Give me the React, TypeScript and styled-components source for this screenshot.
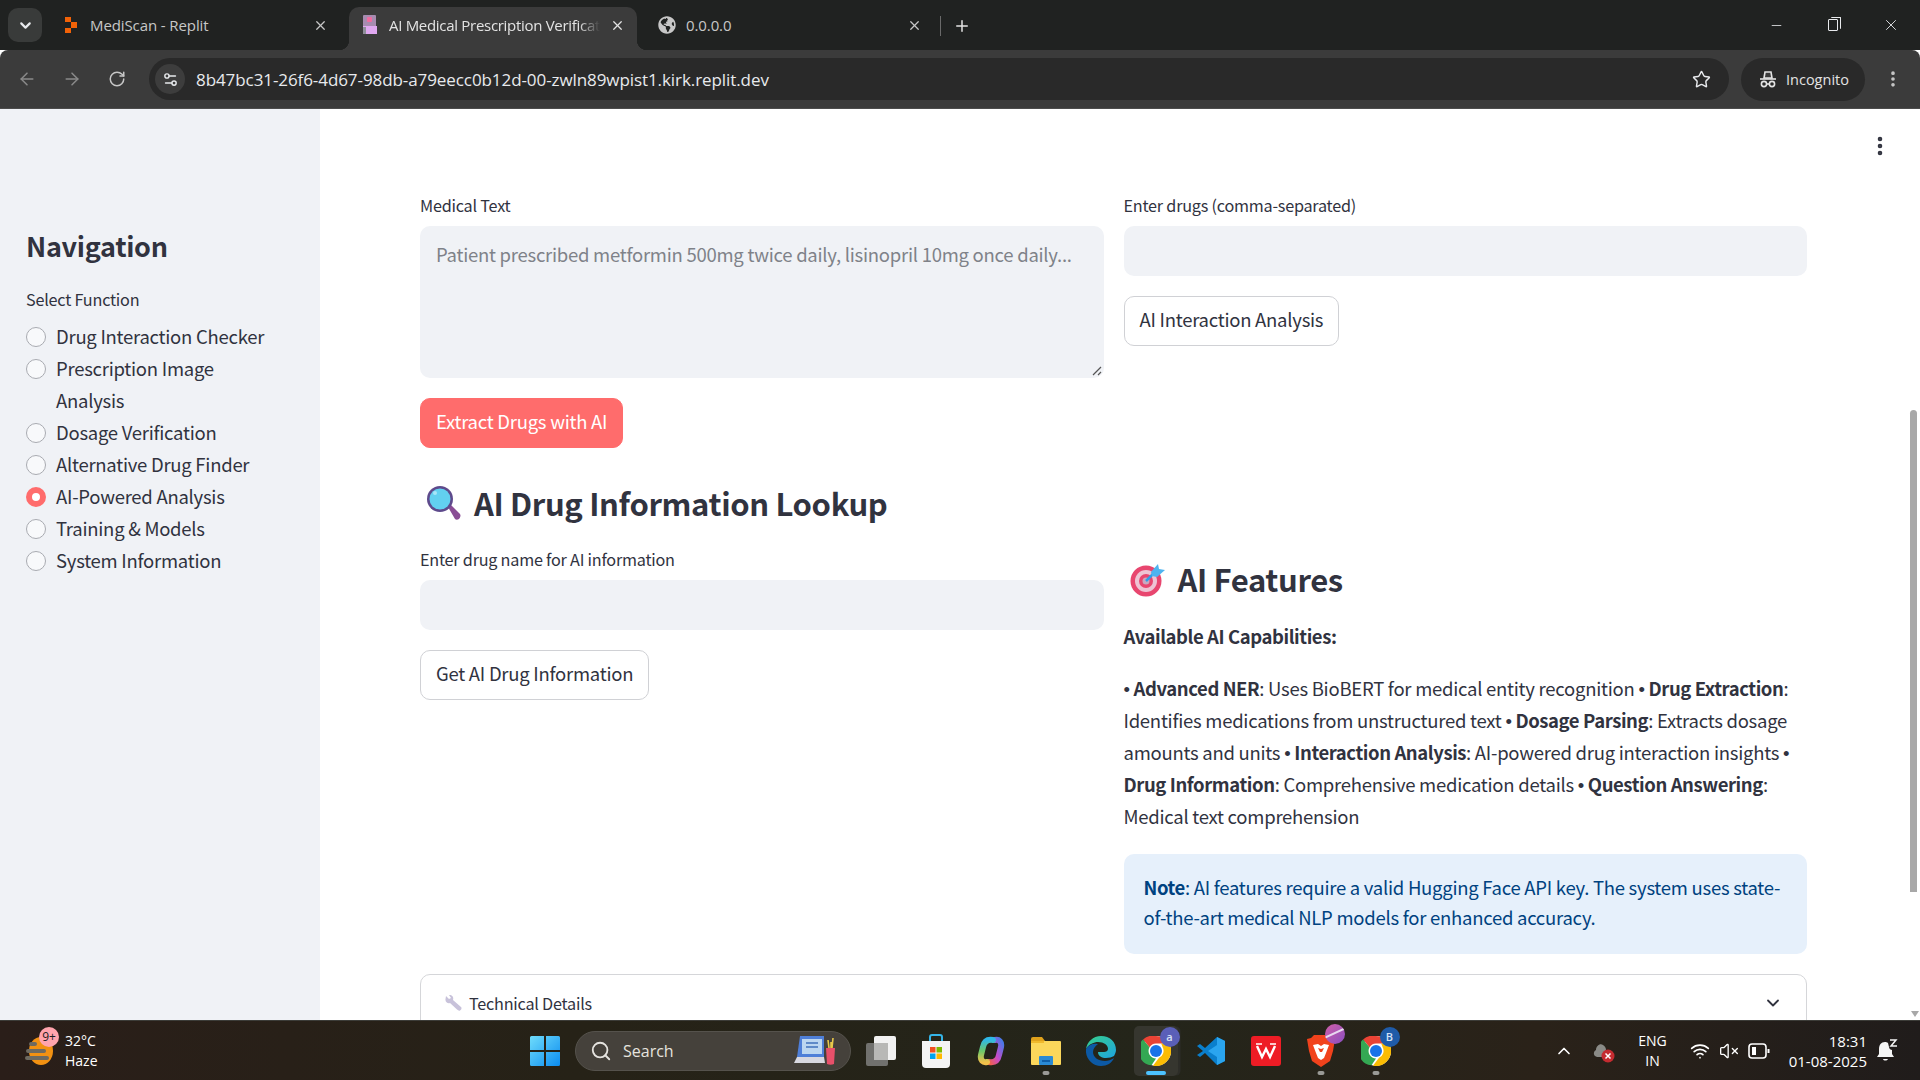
import React from 'react';
import styled, { createGlobalStyle } from 'styled-components';
import {
  ArrowLeft,
  ArrowRight,
  ChevronDown,
  ChevronUp,
  EllipsisVertical,
  Minus,
  Plus,
  RotateCw,
  Search,
  Settings2,
  Star,
  VolumeX,
  Wifi,
  X,
} from 'lucide-react';
import { FaGlobeAmericas } from 'react-icons/fa';

const pageFont = '"Noto Sans CJK SC", "Noto Sans", sans-serif';
const chromeFont = '"Open Sans", "Noto Sans", sans-serif';

const GlobalStyle = createGlobalStyle`
  html, body {
    margin: 0;
    padding: 0;
    height: 100%;
    overflow: hidden;
    background: #fff;
  }
  #root {
    height: 1080px;
  }
  * {
    box-sizing: border-box;
  }
`;

const Screen = styled.div`
  display: flex;
  flex-direction: column;
  width: 1920px;
  height: 1080px;
  overflow: hidden;
`;

/* browser chrome */

const TabStrip = styled.div`
  display: flex;
  align-items: flex-end;
  height: 50px;
  flex: none;
  padding-left: 8px;
  background: #202221;
  font-family: ${chromeFont};
`;

const TabMenu = styled.div`
  display: flex;
  align-items: center;
  justify-content: center;
  width: 34px;
  height: 34px;
  margin-right: 8px;
  margin-bottom: 8px;
  border-radius: 10px;
  background: #393b3a;
  color: #e8eaed;
`;

const Tab = styled.div<{ $active?: boolean; $wide?: boolean }>`
  position: relative;
  display: flex;
  align-items: center;
  gap: 10px;
  width: ${({ $wide }) => ($wide ? '290px' : '288px')};
  height: 43px;
  margin-right: 9px;
  padding: 0 12px 7px;
  border-radius: 10px 10px 0 0;
  background: ${({ $active }) => ($active ? '#3b3b3b' : 'transparent')};
  color: ${({ $active }) => ($active ? '#e3e3e3' : '#c7c7c7')};

  ${({ $active }) =>
    $active &&
    `
    &::before, &::after {
      content: '';
      position: absolute;
      bottom: 0;
      width: 10px;
      height: 10px;
    }
    &::before {
      left: -10px;
      background: radial-gradient(circle at 0 0, transparent 10px, #3b3b3b 10.5px);
    }
    &::after {
      right: -10px;
      background: radial-gradient(circle at 100% 0, transparent 10px, #3b3b3b 10.5px);
    }
  `}
`;

const TabIcon = styled.span`
  display: flex;
  align-items: center;
  justify-content: center;
  flex: none;
  width: 18px;
  height: 18px;
`;

const TabTitle = styled.span<{ $fade?: boolean }>`
  flex: 1;
  min-width: 0;
  overflow: hidden;
  white-space: nowrap;
  font-size: 15px;
  line-height: 20px;
  letter-spacing: ${({ $fade }) => ($fade ? '-0.3px' : '-0.1px')};
  ${({ $fade }) =>
    $fade && 'mask-image: linear-gradient(to right, #000 90%, transparent 100%);'}
`;

const TabDivider = styled.span`
  width: 1px;
  height: 20px;
  margin: 0 12px 14px -3px;
  background: #6a6a6a;
`;

const NewTab = styled.span`
  display: flex;
  margin-bottom: 15px;
  color: #e3e3e3;
`;

const WindowControls = styled.div`
  display: flex;
  align-items: center;
  gap: 44px;
  margin-left: auto;
  margin-right: 20px;
  margin-bottom: 16px;
  color: #e8eaed;
`;

const RestoreIcon = styled.span`
  position: relative;
  display: block;
  width: 10px;
  height: 12px;
  border: 1.2px solid #e8eaed;
  border-radius: 1px;

  &::after {
    content: '';
    position: absolute;
    top: -3.5px;
    right: -3.5px;
    width: 9px;
    height: 11px;
    border-top: 1.2px solid #e8eaed;
    border-right: 1.2px solid #e8eaed;
    border-radius: 1px;
  }
`;

const Toolbar = styled.div`
  display: flex;
  align-items: center;
  height: 59px;
  flex: none;
  padding: 0 17px 0 17px;
  border-radius: 8px 8px 0 0;
  border-bottom: 1px solid #4c4c4c;
  background: #3b3b3b;
  font-family: ${chromeFont};
`;

const NavButton = styled.span<{ $dim?: boolean }>`
  display: flex;
  justify-content: center;
  width: 20px;
  margin-right: 25px;
  color: ${({ $dim }) => ($dim ? '#8a8a8a' : '#c7c7c7')};
`;

const Omnibox = styled.div`
  display: flex;
  align-items: center;
  width: 1580px;
  height: 42px;
  margin-left: -3px;
  padding: 0 18px 0 6px;
  border-radius: 21px;
  background: #292929;
  color: #e8eaed;
`;

const SiteInfo = styled.span`
  display: flex;
  align-items: center;
  justify-content: center;
  width: 30px;
  height: 30px;
  margin-right: 11px;
  border-radius: 50%;
  background: #3d3d3d;
`;

const Url = styled.span`
  flex: 1;
  font-size: 17px;
  letter-spacing: -0.08px;
`;

const IncognitoPill = styled.div`
  display: flex;
  align-items: center;
  gap: 9px;
  width: 124px;
  height: 43px;
  margin-left: 12px;
  padding-left: 18px;
  border-radius: 22px;
  background: #292929;
  color: #e3e3e3;
  font-size: 14.5px;
`;

const MenuDots = styled.span`
  display: flex;
  margin-left: auto;
  color: #c7c7c7;
`;

/* streamlit page */

const Page = styled.div`
  display: flex;
  flex: 1;
  min-height: 0;
  overflow: hidden;
  background: #fff;
  color: #31333f;
  font-family: ${pageFont};
`;

const Sidebar = styled.aside`
  flex: none;
  width: 320px;
  padding: 117px 30px 0 26px;
  background: #f0f2f6;
`;

const SidebarTitle = styled.h2`
  margin: 0 0 20px;
  font-size: 27px;
  line-height: 40px;
  font-weight: 600;
  letter-spacing: -0.3px;
`;

const FieldLabel = styled.div`
  font-size: 16.2px;
  line-height: 26px;
  letter-spacing: -0.22px;
  margin-bottom: 8px;
`;

const RadioList = styled.div`
  margin-top: 0;
`;

const RadioRow = styled.div`
  display: flex;
  align-items: flex-start;
  gap: 10px;
  font-size: 18.5px;
  line-height: 32px;
  letter-spacing: -0.26px;
`;

const RadioText = styled.span`
  max-width: 216px;
`;

const RadioDot = styled.span<{ $on?: boolean }>`
  flex: none;
  width: 20px;
  height: 20px;
  margin-top: 7px;
  border-radius: 50%;
  border: ${({ $on }) => ($on ? '6px solid #ff6c6c' : '1px solid #a9abb1')};
  background: ${({ $on }) => ($on ? '#fff' : '#f8f9fb')};
`;

const Main = styled.main`
  position: relative;
  flex: 1;
  min-width: 0;
  overflow: hidden;
  padding: 83px 103px 0 100px;
`;

const KebabButton = styled.span`
  position: absolute;
  top: 25px;
  right: 18px;
  display: flex;
  color: #31333f;
`;

const Columns = styled.div`
  display: grid;
  grid-template-columns: 1fr 1fr;
  column-gap: 20px;
  align-items: start;
`;

const Column = styled.div`
  min-width: 0;
`;

const TextArea = styled.div`
  position: relative;
  height: 152px;
  padding: 14px 16px;
  border-radius: 10px;
  background: #f0f2f6;
  color: #7f8289;
  font-size: 18.5px;
  line-height: 28px;
  letter-spacing: -0.26px;
`;

const ResizeGrip = styled.svg`
  position: absolute;
  right: 2px;
  bottom: 2px;
`;

const TextInput = styled.div`
  height: 50px;
  border-radius: 10px;
  background: #f0f2f6;
`;

const ActionButton = styled.div<{ $primary?: boolean }>`
  display: inline-flex;
  align-items: center;
  height: 50px;
  margin-top: 20px;
  padding: 0 15px 4px;
  border-radius: 10px;
  border: 1px solid ${({ $primary }) => ($primary ? '#ff6c6c' : '#d0d1d5')};
  background: ${({ $primary }) => ($primary ? '#ff6c6c' : '#fff')};
  color: ${({ $primary }) => ($primary ? '#fff' : '#31333f')};
  font-size: 18.5px;
  letter-spacing: -0.26px;
`;

const SectionHeading = styled.h2<{ $top: number; $bottom: number }>`
  display: flex;
  align-items: center;
  gap: 12px;
  margin: ${({ $top }) => $top}px 0 ${({ $bottom }) => $bottom}px;
  font-size: 31px;
  line-height: 44px;
  font-weight: 600;
  letter-spacing: -0.36px;
`;

const HeadingEmoji = styled.svg`
  flex: none;
  margin-left: 6px;
`;

const BoldLine = styled.p`
  margin: 19px 0 20px;
  font-size: 18.5px;
  line-height: 32px;
  font-weight: 600;
  letter-spacing: -0.42px;
`;

const Paragraph = styled.p`
  margin: 0;
  font-size: 18.5px;
  line-height: 32px;
  letter-spacing: -0.26px;

  strong {
    font-weight: 600;
    letter-spacing: -0.42px;
  }
`;

const Bullet = styled.span`
  font-family: "Liberation Sans", sans-serif;
  line-height: 0;
`;

const InfoBox = styled.div`
  margin-top: 22px;
  height: 100px;
  padding: 18px 20px 0;
  border-radius: 10px;
  background: #e6f0fb;
  color: #004280;
  font-size: 18.5px;
  line-height: 30px;
  letter-spacing: -0.26px;

  strong {
    font-weight: 600;
    letter-spacing: -0.42px;
  }
`;

const Expander = styled.div`
  display: flex;
  align-items: center;
  height: 70px;
  margin-top: 20px;
  padding: 0 23px 12px 24px;
  border: 1px solid #d5d6d9;
  border-radius: 10px;
  font-size: 16.2px;
  letter-spacing: -0.22px;
`;

const ExpanderTitle = styled.span`
  flex: 1;
  margin-left: 7px;
`;

const ScrollTrack = styled.div`
  position: relative;
  flex: none;
  width: 10px;
  padding-top: 301px;
`;

const ScrollThumb = styled.div`
  width: 7px;
  height: 482px;
  border-radius: 4px 4px 0 0;
  background: #a8a8a8;
`;

const ScrollArrow = styled.span`
  position: absolute;
  left: 1px;
  bottom: 3px;
  width: 0;
  height: 0;
  border-left: 4px solid transparent;
  border-right: 4px solid transparent;
  border-top: 6px solid #a8a8a8;
`;

/* taskbar */

const Taskbar = styled.div`
  display: flex;
  align-items: center;
  height: 60px;
  flex: none;
  border-top: 1px solid #3c3c38;
  background: linear-gradient(90deg, #2a1e19 0%, #262217 30%, #24251a 60%, #2a2219 80%, #201c1b 100%);
  color: #fff;
  font-family: ${chromeFont};
`;

const Weather = styled.div`
  display: flex;
  align-items: center;
  width: 517px;
  flex: none;
  padding-left: 25px;
`;

const WeatherIcon = styled.span`
  position: relative;
  display: block;
  width: 30px;
  height: 30px;
  margin-right: 10px;
`;

const NotifyBadge = styled.span`
  position: absolute;
  top: -9px;
  left: 14px;
  width: 20px;
  height: 20px;
  border-radius: 50%;
  background: #ffa4ad;
  color: #1c1c1c;
  font-size: 12px;
  line-height: 20px;
  text-align: center;
`;

const WeatherText = styled.div`
  font-size: 14px;
  line-height: 20px;
`;

const TaskSlot = styled.span`
  position: relative;
  display: flex;
  align-items: center;
  justify-content: center;
  flex: none;
  width: 55px;
  height: 50px;
`;

const ActiveTile = styled.span`
  position: absolute;
  left: 6px;
  top: 0;
  width: 44px;
  height: 50px;
  border-radius: 5px;
  background: #36362f;
  box-shadow: 3px 0 0 -0.5px #2d2d28;
`;

const SlotIcon = styled.span`
  position: relative;
  display: flex;
`;

const RunningDot = styled.span<{ $active?: boolean }>`
  position: absolute;
  bottom: 1px;
  left: 50%;
  transform: translateX(-50%);
  width: ${({ $active }) => ($active ? '20px' : '7px')};
  height: 4px;
  border-radius: 2px;
  background: ${({ $active }) => ($active ? '#4cc2ff' : '#9a9a96')};
`;

const ProfileBadge = styled.span<{ $color: string }>`
  position: absolute;
  top: -9px;
  right: -9px;
  width: 20px;
  height: 20px;
  border-radius: 50%;
  background: ${({ $color }) => $color};
  color: #d5e2f5;
  font-size: 11px;
  font-weight: 600;
  line-height: 20px;
  text-align: center;
`;

const SearchBox = styled.div`
  display: flex;
  align-items: center;
  width: 276px;
  height: 40px;
  flex: none;
  margin: 0 2px 0 3px;
  padding: 0 14px 0 14px;
  border-radius: 20px;
  border: 1px solid #55524c;
  background: #45413b;
  color: #e5e3df;
  font-size: 16px;
`;

const SearchLabel = styled.span`
  flex: 1;
  margin-left: 11px;
`;

const Tray = styled.div`
  display: flex;
  align-items: center;
  margin-left: auto;
  padding-right: 35px;
  color: #fff;
`;

const TrayIcon = styled.span<{ $left: number }>`
  display: flex;
  margin-left: ${({ $left }) => $left}px;
`;

const TrayLang = styled.div`
  margin: 0 23px 0 22px;
  font-size: 14px;
  line-height: 20px;
  text-align: center;
`;

const Clock = styled.div`
  margin-left: 19px;
  font-size: 15px;
  line-height: 20px;
  text-align: right;
`;

const BellIcon = styled.span`
  position: relative;
  display: flex;
  margin-left: 9px;
  margin-right: -13px;
`;

const PurpleBadge = styled.span`
  position: absolute;
  top: -11px;
  right: -10px;
  width: 20px;
  height: 20px;
  border-radius: 50%;
  background: linear-gradient(135deg, #d05fa8, #8a4ec0);
  overflow: hidden;

  &::after {
    content: '';
    position: absolute;
    top: 8px;
    left: -2px;
    width: 24px;
    height: 1.5px;
    background: #e8d8f0;
    transform: rotate(-25deg);
  }
`;

/* drawings */

const ReplitIcon = () => (
  <svg width="14" height="16" viewBox="0 0 14 16">
    <path d="M1 0h6v5H1zM7 5h6v6H7zM1 11h6v5H1z" fill="#f26207" />
  </svg>
);

const DocFavicon = () => (
  <svg width="16" height="20" viewBox="0 0 16 20">
    <rect x="1" y="0" width="13" height="12" rx="1" fill="#a78bb0" />
    <rect x="5" y="2" width="5" height="5" rx="1" fill="#f06ba0" />
    <rect x="1" y="11" width="14" height="8" fill="#e0a8f0" />
    <rect x="1" y="12" width="3" height="7" fill="#8f8f9a" />
  </svg>
);

const IncognitoIcon = () => (
  <svg width="18" height="18" viewBox="0 0 18 18" fill="none" stroke="#e3e3e3" strokeWidth="1.6">
    <path d="M5 8l1-6h6l1 6z" fill="#3b3b3b" />
    <path d="M1 9h16" />
    <circle cx="5" cy="14" r="2.6" />
    <circle cx="13" cy="14" r="2.6" />
    <path d="M7.5 14h3" />
  </svg>
);

const MagnifierEmoji = () => (
  <HeadingEmoji width="36" height="36" viewBox="0 0 36 36">
    <path d="M22 22l3-2 9 9c1 1.500 0 4-1 5-1.500 1-3 1-4 0z" fill="#8a4d95" />
    <circle cx="14" cy="14" r="13" fill="#5e4a8c" />
    <circle cx="14" cy="14" r="10.500" fill="#62d0f0" />
    <circle cx="9" cy="8" r="2" fill="#a8e6f8" />
  </HeadingEmoji>
);

const TargetEmoji = () => (
  <HeadingEmoji width="36" height="36" viewBox="0 0 36 36">
    <circle cx="16" cy="20" r="15.500" fill="#e8466f" />
    <circle cx="16" cy="20" r="11" fill="#eec4d4" />
    <circle cx="16" cy="20" r="7" fill="#e8466f" />
    <circle cx="16" cy="20" r="3.500" fill="#c9a8c0" />
    <path d="M16 20l10-10" stroke="#2f9fe8" strokeWidth="2.500" />
    <path d="M21 11l7-8 1 5 6 1-8 7-5-1z" fill="#4fb4f0" />
  </HeadingEmoji>
);

const WrenchEmoji = () => (
  <svg width="17" height="17" viewBox="0 0 17 17">
    <path
      d="M1 1l3 3 2-1-2-3c3-.5 5 2 4 5l8 7c1 1 .5 2.500-1 3.500-1 .5-2 0-3-1L5 8C3 9 0 7 .5 4z"
      fill="#c8c2da"
    />
  </svg>
);

const WindowsLogo = () => (
  <svg width="30" height="30" viewBox="0 0 30 30">
    <defs>
      <linearGradient id="winGrad" x1="0" y1="0" x2="1" y2="1">
        <stop offset="0" stopColor="#6fdcfb" />
        <stop offset="1" stopColor="#0b8cf0" />
      </linearGradient>
    </defs>
    <path d="M0 1.500A1.500 1.500 0 0 1 1.500 0H14v14H0zM16 0h12.500A1.500 1.500 0 0 1 30 1.500V14H16zM0 16h14v14H1.500A1.500 1.500 0 0 1 0 28.500zM16 16h14v12.500a1.500 1.500 0 0 1-1.500 1.500H16z" fill="url(#winGrad)" />
  </svg>
);

const SearchArt = () => (
  <svg width="42" height="32" viewBox="0 0 42 32">
    <path d="M6 1h24v21H3z" fill="#4f7fd8" />
    <rect x="8" y="4" width="20" height="15" fill="#bcd6f0" />
    <rect x="12" y="7" width="12" height="2" fill="#5f8ac8" />
    <rect x="12" y="11" width="12" height="2" fill="#5f8ac8" />
    <path d="M3 22h27l1 6H0z" fill="#d8d8e0" />
    <path d="M32 13h9l-1 16c-2 1-5 1-7 0z" fill="#e8506a" />
    <path d="M35 13l-1-8M38 13l1-10M37 13v-6" stroke="#e8c84a" strokeWidth="1.600" />
  </svg>
);

const TaskViewIcon = () => (
  <svg width="30" height="30" viewBox="0 0 30 30">
    <rect x="8" y="0" width="22" height="24" rx="2" fill="#f2f2f2" />
    <rect x="0" y="7" width="22" height="23" rx="2" fill="#7a7a78" opacity="0.9" />
    <rect x="8" y="7" width="14" height="17" fill="#b8b8b6" />
  </svg>
);

const StoreIcon = () => (
  <svg width="30" height="34" viewBox="0 0 30 34">
    <path d="M9 7V3a2 2 0 0 1 2-2h8a2 2 0 0 1 2 2v4" fill="none" stroke="#35b5e8" strokeWidth="2" />
    <path d="M1 7h28v23a4 4 0 0 1-4 4H5a4 4 0 0 1-4-4z" fill="#f4f4f4" />
    <rect x="9" y="13" width="5.500" height="5.500" fill="#f25022" />
    <rect x="15.500" y="13" width="5.500" height="5.500" fill="#7fba00" />
    <rect x="9" y="19.500" width="5.500" height="5.500" fill="#00a4ef" />
    <rect x="15.500" y="19.500" width="5.500" height="5.500" fill="#ffb900" />
  </svg>
);

const CopilotIcon = () => (
  <svg width="30" height="30" viewBox="0 0 30 30" fill="none" strokeWidth="6" strokeLinecap="round">
    <defs>
      <linearGradient id="copA" x1="0" y1="1" x2="1" y2="0">
        <stop offset="0" stopColor="#f0604a" />
        <stop offset="0.45" stopColor="#c84ac8" />
        <stop offset="1" stopColor="#4a78e8" />
      </linearGradient>
      <linearGradient id="copB" x1="0.5" y1="0" x2="0.5" y2="1">
        <stop offset="0" stopColor="#2fb8e8" />
        <stop offset="0.5" stopColor="#6cc86a" />
        <stop offset="1" stopColor="#f2c14a" />
      </linearGradient>
    </defs>
    <path d="M13 26C19 27 22 24 23 19L25 11C26 6 23 3 19 4" stroke="url(#copA)" />
    <path d="M17 4C11 3 8 6 7 11L5 19C4 24 7 27 11 26" stroke="url(#copB)" />
  </svg>
);

const ExplorerIcon = () => (
  <svg width="30" height="30" viewBox="0 0 30 30">
    <path d="M0 3a2 2 0 0 1 2-2h9l3 4H0z" fill="#e0a21c" />
    <rect x="0" y="5" width="30" height="24" rx="1" fill="#fbd75b" />
    <path d="M0 5h13v2H0z" fill="#f0b92c" />
    <rect x="8" y="20" width="14" height="9" rx="1" fill="#2a8ad4" />
    <rect x="11" y="24" width="8" height="2" fill="#0f5fa8" />
  </svg>
);

const EdgeIcon = () => (
  <svg width="30" height="30" viewBox="0 0 30 30">
    <defs>
      <linearGradient id="edgeA" x1="0" y1="0" x2="1" y2="1">
        <stop offset="0" stopColor="#37d08a" />
        <stop offset="1" stopColor="#1ea4e0" />
      </linearGradient>
    </defs>
    <path d="M15 0C7 0 1 6 0 13c3-5 8-7 12-7 6 0 10 3 10 7 0 2-2 3-4 3h-6c0 4 4 6 8 6 3 0 6-1 8-2 1-2 2-4 2-6C30 6 24 0 15 0z" fill="url(#edgeA)" />
    <path d="M0 13c-1 9 6 17 15 17 6 0 11-3 13-8-3 2-6 3-9 3-7 0-12-4-12-9 0-3 2-6 5-8C7 7 2 9 0 13z" fill="#0c59a4" />
  </svg>
);

const ChromeIcon = () => (
  <svg width="30" height="30" viewBox="0 0 30 30">
    <circle cx="15" cy="15" r="15" fill="#fff" />
    <path d="M15 0a15 15 0 0 1 13 7.500H15A7.500 7.500 0 0 0 8.500 11.300L2 3.500A15 15 0 0 1 15 0z" fill="#ea4335" />
    <path d="M2 3.500l6.500 7.800A7.500 7.500 0 0 0 15 22.500L10.500 29.300A15 15 0 0 1 2 3.500z" fill="#34a853" />
    <path d="M28 7.500A15 15 0 0 1 12 29.700l6-8A7.500 7.500 0 0 0 21.500 11 7.500 7.500 0 0 0 20 7.500z" fill="#fbbc04" />
    <circle cx="15" cy="15" r="6" fill="#1a73e8" />
  </svg>
);

const VsCodeIcon = () => (
  <svg width="30" height="30" viewBox="0 0 30 30">
    <path d="M21 1l8 4v20l-8 4L9 17l-5 4-3-2 6-4-6-5 3-2 5 4z" fill="#0a7fcc" />
    <path d="M21 1l8 4v20l-8 4zM21 9l-9 6 9 6z" fill="#2aa5ef" fillRule="evenodd" />
  </svg>
);

const WpsIcon = () => (
  <svg width="30" height="30" viewBox="0 0 30 30">
    <rect width="30" height="30" rx="3" fill="#ee1c25" />
    <path d="M6 10l5 11 4-8 4 8 5-11" fill="none" stroke="#fff" strokeWidth="2.400" />
    <path d="M5 8h6M19 8h6" stroke="#fff" strokeWidth="1.500" />
  </svg>
);

const BraveIcon = () => (
  <svg width="28" height="32" viewBox="0 0 28 32">
    <path d="M7 0h14l3 3 4 1-2 12-3 10-9 6-9-6L2 16 0 4l4-1z" fill="#f1421c" />
    <path d="M6 10l5-1 3 2 3-2 5 1-3 8-2 5-3 2-3-2-2-5z" fill="#fff" />
    <path d="M11 13l3 1 3-1-2 4h-2z" fill="#f1421c" />
  </svg>
);

const WeatherArt = () => (
  <svg width="30" height="30" viewBox="0 0 30 30">
    <ellipse cx="16" cy="15" rx="12" ry="14" fill="#f29112" />
    <rect x="4" y="6" width="8" height="4" rx="2" fill="#6e6a60" />
    <rect x="1" y="13" width="20" height="4" rx="2" fill="#6e6a60" />
    <rect x="0" y="20" width="24" height="4" rx="2" fill="#6e6a60" />
  </svg>
);

const CloudError = () => (
  <svg width="24" height="24" viewBox="0 0 24 24">
    <path d="M3 17c-2-2-1-5 1-6 0-4 4-7 7-5 2 1 3 3 3 5l-2 7H5z" fill="#8a8a86" />
    <circle cx="16" cy="17" r="6.500" fill="#c42b30" />
    <path d="M13.500 14.500l5 5M18.500 14.500l-5 5" stroke="#fff" strokeWidth="1.500" />
  </svg>
);

const BatteryIcon = () => (
  <svg width="22" height="18" viewBox="0 0 22 18" fill="none" stroke="#fff" strokeWidth="1.600">
    <rect x="1" y="2" width="17" height="14" rx="3" />
    <path d="M20.500 7v4" strokeWidth="2" />
    <rect x="4" y="5" width="4" height="8" fill="#fff" stroke="none" />
  </svg>
);

const BellArt = () => (
  <svg width="22" height="24" viewBox="0 0 22 24">
    <path d="M9 3c-4 0-6 3-6 7v5l-2 3h17l-2-3v-4c-1 0-3-1-3-3l-1-4c-1-1-2-1-3-1z" fill="#f5f5f5" />
    <path d="M7 20c.5 2 4 2 5 0z" fill="#f5f5f5" />
    <path d="M14 1h6l-5 6h6" fill="none" stroke="#f5f5f5" strokeWidth="1.500" />
  </svg>
);

const radioOptions = [
  'Drug Interaction Checker',
  'Prescription Image Analysis',
  'Dosage Verification',
  'Alternative Drug Finder',
  'AI-Powered Analysis',
  'Training & Models',
  'System Information',
];

const App: React.FC = () => {
  return (
    <Screen>
      <GlobalStyle />

      <TabStrip>
        <TabMenu>
          <ChevronDown size={17} strokeWidth={3} />
        </TabMenu>
        <Tab $wide>
          <TabIcon>
            <ReplitIcon />
          </TabIcon>
          <TabTitle>MediScan - Replit</TabTitle>
          <X size={15} strokeWidth={2} />
        </Tab>
        <Tab $active>
          <TabIcon>
            <DocFavicon />
          </TabIcon>
          <TabTitle $fade>AI Medical Prescription Verification</TabTitle>
          <X size={15} strokeWidth={2} />
        </Tab>
        <Tab>
          <TabIcon>
            <FaGlobeAmericas size={18} color="#c7c7c7" />
          </TabIcon>
          <TabTitle>0.0.0.0</TabTitle>
          <X size={15} strokeWidth={2} />
        </Tab>
        <TabDivider />
        <NewTab>
          <Plus size={18} strokeWidth={2} />
        </NewTab>
        <WindowControls>
          <Minus size={15} strokeWidth={1.3} />
          <RestoreIcon />
          <X size={18} strokeWidth={1.2} />
        </WindowControls>
      </TabStrip>

      <Toolbar>
        <NavButton $dim>
          <ArrowLeft size={20} strokeWidth={1.8} />
        </NavButton>
        <NavButton $dim>
          <ArrowRight size={20} strokeWidth={1.8} />
        </NavButton>
        <NavButton>
          <RotateCw size={18} strokeWidth={2} />
        </NavButton>
        <Omnibox>
          <SiteInfo>
            <Settings2 size={17} strokeWidth={2} />
          </SiteInfo>
          <Url>8b47bc31-26f6-4d67-98db-a79eecc0b12d-00-zwln89wpist1.kirk.replit.dev</Url>
          <Star size={19} strokeWidth={1.8} />
        </Omnibox>
        <IncognitoPill>
          <IncognitoIcon />
          <span>Incognito</span>
        </IncognitoPill>
        <MenuDots>
          <EllipsisVertical size={20} strokeWidth={2.4} />
        </MenuDots>
      </Toolbar>

      <Page>
        <Sidebar>
          <SidebarTitle>Navigation</SidebarTitle>
          <FieldLabel>Select Function</FieldLabel>
          <RadioList>
            {radioOptions.map((option) => (
              <RadioRow key={option}>
                <RadioDot $on={option === 'AI-Powered Analysis'} />
                <RadioText>{option}</RadioText>
              </RadioRow>
            ))}
          </RadioList>
        </Sidebar>

        <Main>
          <KebabButton>
            <EllipsisVertical size={24} strokeWidth={2.6} />
          </KebabButton>

          <Columns>
            <Column>
              <FieldLabel>Medical Text</FieldLabel>
              <TextArea>
                Patient prescribed metformin 500mg twice daily, lisinopril 10mg once daily...
                <ResizeGrip width="10" height="10" viewBox="0 0 10 10" stroke="#555" strokeWidth="1.200">
                  <path d="M1 9l8-8M6 9l3-3" />
                </ResizeGrip>
              </TextArea>
              <ActionButton $primary>Extract Drugs with AI</ActionButton>

              <SectionHeading $top={33} $bottom={21}>
                <MagnifierEmoji />
                AI Drug Information Lookup
              </SectionHeading>

              <FieldLabel>Enter drug name for AI information</FieldLabel>
              <TextInput />
              <ActionButton>Get AI Drug Information</ActionButton>
            </Column>

            <Column>
              <FieldLabel>Enter drugs (comma-separated)</FieldLabel>
              <TextInput />
              <ActionButton>AI Interaction Analysis</ActionButton>

              <SectionHeading $top={211} $bottom={2}>
                <TargetEmoji />
                AI Features
              </SectionHeading>

              <BoldLine>Available AI Capabilities:</BoldLine>
              <Paragraph>
                <Bullet>•</Bullet> <strong>Advanced NER</strong>: Uses BioBERT for medical entity
                recognition <Bullet>•</Bullet> <strong>Drug Extraction</strong>: Identifies
                medications from unstructured text <Bullet>•</Bullet>{' '}
                <strong>Dosage Parsing</strong>: Extracts dosage amounts and units{' '}
                <Bullet>•</Bullet> <strong>Interaction Analysis</strong>: AI-powered drug
                interaction insights <Bullet>•</Bullet> <strong>Drug Information</strong>:
                Comprehensive medication details <Bullet>•</Bullet>{' '}
                <strong>Question Answering</strong>: Medical text comprehension
              </Paragraph>
              <InfoBox>
                <strong>Note</strong>: AI features require a valid Hugging Face API key. The system
                uses state-of-the-art medical NLP models for enhanced accuracy.
              </InfoBox>
            </Column>
          </Columns>

          <Expander>
            <WrenchEmoji />
            <ExpanderTitle>Technical Details</ExpanderTitle>
            <ChevronDown size={20} strokeWidth={2.2} />
          </Expander>
        </Main>

        <ScrollTrack>
          <ScrollThumb />
          <ScrollArrow />
        </ScrollTrack>
      </Page>

      <Taskbar>
        <Weather>
          <WeatherIcon>
            <WeatherArt />
            <NotifyBadge>9+</NotifyBadge>
          </WeatherIcon>
          <WeatherText>
            <div>32°C</div>
            <div>Haze</div>
          </WeatherText>
        </Weather>

        <TaskSlot>
          <WindowsLogo />
        </TaskSlot>
        <SearchBox>
          <Search size={22} strokeWidth={2} />
          <SearchLabel>Search</SearchLabel>
          <SearchArt />
        </SearchBox>
        <TaskSlot>
          <TaskViewIcon />
        </TaskSlot>
        <TaskSlot>
          <StoreIcon />
        </TaskSlot>
        <TaskSlot>
          <CopilotIcon />
        </TaskSlot>
        <TaskSlot>
          <ExplorerIcon />
          <RunningDot />
        </TaskSlot>
        <TaskSlot>
          <EdgeIcon />
        </TaskSlot>
        <TaskSlot>
          <ActiveTile />
          <SlotIcon>
            <ChromeIcon />
            <ProfileBadge $color="#5a5fb8">a</ProfileBadge>
          </SlotIcon>
          <RunningDot $active />
        </TaskSlot>
        <TaskSlot>
          <VsCodeIcon />
        </TaskSlot>
        <TaskSlot>
          <WpsIcon />
        </TaskSlot>
        <TaskSlot>
          <SlotIcon>
            <BraveIcon />
            <PurpleBadge />
          </SlotIcon>
          <RunningDot />
        </TaskSlot>
        <TaskSlot>
          <SlotIcon>
            <ChromeIcon />
            <ProfileBadge $color="#1f5ba8">B</ProfileBadge>
          </SlotIcon>
          <RunningDot />
        </TaskSlot>

        <Tray>
          <ChevronUp size={20} strokeWidth={2} />
          <TrayIcon $left={18}>
            <CloudError />
          </TrayIcon>
          <TrayLang>
            <div>ENG</div>
            <div>IN</div>
          </TrayLang>
          <Wifi size={20} strokeWidth={2} />
          <TrayIcon $left={9}>
            <VolumeX size={20} strokeWidth={1.6} />
          </TrayIcon>
          <TrayIcon $left={9}>
            <BatteryIcon />
          </TrayIcon>
          <Clock>
            <div>18:31</div>
            <div>01-08-2025</div>
          </Clock>
          <BellIcon>
            <BellArt />
          </BellIcon>
        </Tray>
      </Taskbar>
    </Screen>
  );
};

export default App;
